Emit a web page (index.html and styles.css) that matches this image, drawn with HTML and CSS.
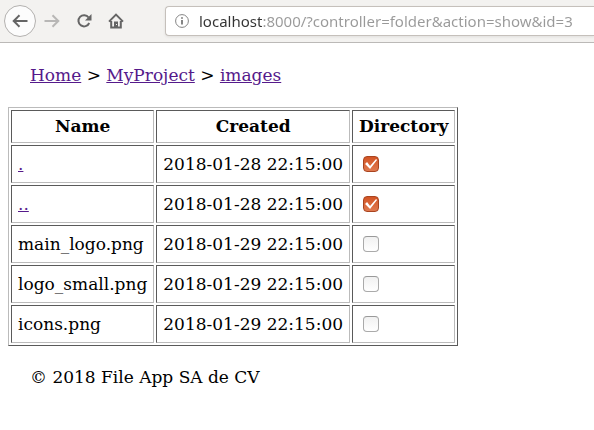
FILE: index.html
```html
<!DOCTYPE html>
<html lang="en">
<head>
<meta charset="utf-8">
<title>images</title>
<link rel="stylesheet" href="styles.css">
</head>
<body>
<header class="toolbar">
  <button class="tool back" type="button" aria-label="Back">
    <svg width="16" height="16" viewBox="0 0 16 16"><path d="M15.500 8H2M7.500 2.200L1.700 8l5.800 5.800"/></svg>
  </button>
  <button class="tool forward" type="button" aria-label="Forward" disabled>
    <svg width="16" height="16" viewBox="0 0 16 16"><path d="M0.500 8H14M8.500 2.200L14.300 8l-5.800 5.800"/></svg>
  </button>
  <button class="tool" type="button" aria-label="Reload">
    <svg width="16" height="16" viewBox="0 0 16 16"><path d="M12.600 4.500A5.600 5.600 0 1 0 13.200 10"/><path class="solid" d="M15.500 1v6.500H9z"/></svg>
  </button>
  <button class="tool" type="button" aria-label="Home">
    <svg width="16" height="16" viewBox="0 0 16 16"><path d="M1 8.600L8 1.600l7 7M3.200 8v6.500h9.600V8"/><path class="solid" fill-rule="evenodd" d="M6 8.500h4V15H6zM8 11h1v1H8z"/></svg>
  </button>
  <div class="address">
    <svg class="info" width="14" height="14" viewBox="0 0 14 14"><circle cx="7" cy="7" r="6.400"/><path d="M7 6v4.500M7 3.200v1.600"/></svg>
    <input class="url" type="text" aria-label="Address" spellcheck="false" value="localhost:8000/?controller=folder&amp;action=show&amp;id=3">
  </div>
</header>
<main class="page">
  <nav class="crumbs"><a href="#">Home</a> &gt; <a href="#">MyProject</a> &gt; <a href="#">images</a></nav>
  <table class="files">
    <thead>
      <tr><th scope="col">Name</th><th scope="col">Created</th><th scope="col">Directory</th></tr>
    </thead>
    <tbody>
      <tr><td><a href="#">.</a></td><td>2018-01-28 22:15:00</td><td><input class="check" type="checkbox" aria-label="Directory: ." checked></td></tr>
      <tr><td><a href="#">..</a></td><td>2018-01-28 22:15:00</td><td><input class="check" type="checkbox" aria-label="Directory: .." checked></td></tr>
      <tr><td>main_logo.png</td><td>2018-01-29 22:15:00</td><td><input class="check" type="checkbox" aria-label="Directory: main_logo.png"></td></tr>
      <tr><td>logo_small.png</td><td>2018-01-29 22:15:00</td><td><input class="check" type="checkbox" aria-label="Directory: logo_small.png"></td></tr>
      <tr><td>icons.png</td><td>2018-01-29 22:15:00</td><td><input class="check" type="checkbox" aria-label="Directory: icons.png"></td></tr>
    </tbody>
  </table>
  <footer class="copyright">© 2018 File App SA de CV</footer>
</main>
</body>
</html>
```
FILE: styles.css
```css
* { box-sizing: border-box; }

body {
  margin: 0;
  background: #fff;
  color: #000;
  font: 17px/19px "DejaVu Serif", serif;
}

.toolbar {
  display: flex;
  align-items: center;
  height: 43px;
  padding-left: 4px;
  background: #f3f2f0;
  border-bottom: 1px solid #bbb9b7;
}

.tool {
  display: grid;
  place-items: center;
  flex: none;
  width: 32px;
  height: 32px;
  padding: 0;
  border: 0;
  background: none;
}

.tool svg {
  fill: none;
  stroke: #656565;
  stroke-width: 2;
}

.tool .solid {
  fill: #656565;
  stroke: none;
}

.back {
  border: 1px solid #b3b1af;
  border-radius: 50%;
  background: #fcfcfc;
}

.forward svg { stroke: #b8b7b6; }

.address {
  display: flex;
  align-items: center;
  flex: 1;
  min-width: 0;
  height: 30px;
  margin-left: 33px;
  padding-left: 9px;
  gap: 10px;
  border: 1px solid #c5c0bb;
  border-right: 0;
  border-radius: 4px 0 0 4px;
  background: #fff;
  box-shadow: 0 1px 3px rgb(0 0 0 / 8%);
}

.info {
  flex: none;
  fill: none;
  stroke: #858585;
}

.info path { stroke-width: 2; }

/* The host name is dark, the rest of the address is muted. */
.url {
  flex: 1;
  min-width: 0;
  height: 28px;
  padding: 0;
  border: 0;
  outline: 0;
  background: linear-gradient(90deg, #333 63px, #999 63px);
  background-clip: text;
  color: transparent;
  caret-color: #333;
  font: 15px "Noto Sans", sans-serif;
}

.page { padding: 23px 8px; }

.crumbs { padding-left: 22px; }

a { color: #551a8b; }

.files {
  margin-top: 22px;
  border: 1px solid;
  border-color: #bbb #5a5a5a #5a5a5a #bbb;
  border-spacing: 2px;
}

.files th,
.files td {
  padding: 6px;
  border: 1px solid;
  border-color: #5a5a5a #bbb #bbb #5a5a5a;
  text-align: left;
}

.files th { text-align: center; }

.files td { height: 38px; }

.check {
  display: block;
  appearance: none;
  width: 16px;
  height: 16px;
  margin: 0 4px;
  border: 1px solid #aaa;
  border-top-color: #999;
  border-radius: 4px;
  background: linear-gradient(#f1f1f1, #fff);
}

.check:checked {
  border-color: #a9441f;
  background: linear-gradient(#d35424, #e07a50);
}

.check:checked::before {
  content: "";
  display: block;
  width: 14px;
  height: 14px;
  background: #fff;
  clip-path: polygon(1px 7px, 3px 5px, 6px 9px, 12px 2px, 13px 3px, 6px 12px);
}

.copyright {
  margin-top: 22px;
  padding-left: 22px;
}
```
